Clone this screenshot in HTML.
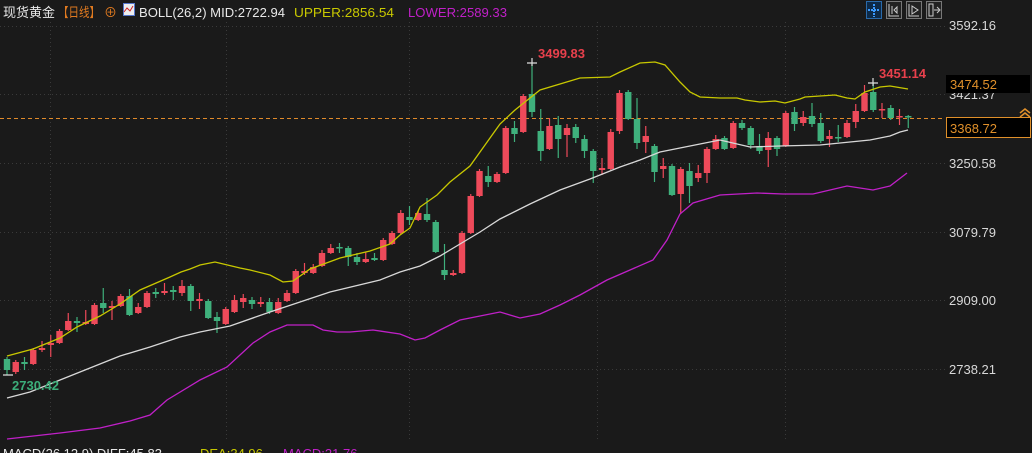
<!DOCTYPE html>
<html><head><meta charset="utf-8"><style>
html,body{margin:0;padding:0;background:#1a1a1a;width:1032px;height:453px;overflow:hidden}
svg{display:block}
text{font-family:"Liberation Sans","Noto Sans CJK SC",sans-serif}
</style></head><body>
<svg id="s" width="1032" height="453" xmlns="http://www.w3.org/2000/svg">
<rect width="1032" height="453" fill="#1a1a1a"/>
<g id="grid" stroke="#3a3a3a" stroke-dasharray="1,3" stroke-width="1">
<line x1="0" y1="94.5" x2="945" y2="94.5"/><line x1="0" y1="163.5" x2="945" y2="163.5"/>
<line x1="0" y1="232.5" x2="945" y2="232.5"/><line x1="0" y1="300.5" x2="945" y2="300.5"/>
<line x1="0" y1="369.5" x2="945" y2="369.5"/><line x1="0" y1="26.5" x2="945" y2="26.5"/>
<line x1="50.5" y1="22" x2="50.5" y2="440"/><line x1="226.5" y1="22" x2="226.5" y2="440"/>
<line x1="409.5" y1="22" x2="409.5" y2="440"/><line x1="597.5" y1="22" x2="597.5" y2="440"/>
<line x1="785.5" y1="22" x2="785.5" y2="440"/>
</g>
<line x1="0" y1="118.5" x2="945" y2="118.5" stroke="#e08a2a" stroke-dasharray="4,3" stroke-width="1"/>
<g id="c"></g>
<polyline fill="none" stroke="#c8c800" stroke-width="1.3" points="7,356 33,349 60,338 77,327 100,316 120,304 140,290 170,277 181,272 190,269 200,265 215,262 240,268 250,270 270,275 283,282 293,281 310,269 340,258 370,251 390,244 400,235 410,228 420,207 437,195 450,182 470,166 500,124 515,110 540,90 580,78 610,77 620,72 640,63 655,62 665,65 680,82 690,92 700,97 720,98 737,98 745,100 760,102 775,101 785,103 800,99 805,97 835,95 847,98 855,99 865,92 880,87 890,86 908,89"/>
<polyline fill="none" stroke="#d8d8d8" stroke-width="1.3" points="7,398 30,392 60,380 90,368 120,356 150,347 180,337 200,332 230,326 270,312 300,302 330,292 380,280 400,272 420,266 440,256 460,244 480,232 500,219 530,204 560,190 590,179 620,167 640,160 660,152 680,148 700,144 720,140 750,147 780,146 820,145 850,142 870,140 890,136 900,132 908,130"/>
<polyline fill="none" stroke="#c020c8" stroke-width="1.3" points="7,439 60,433 100,428 130,421 150,415 167,400 200,380 227,367 253,343 270,332 287,325 313,325 323,330 337,332 350,332 373,330 400,334 415,340 425,338 440,330 460,320 480,316 500,312 520,318 540,314 560,305 580,295 607,280 630,270 653,260 667,240 680,214 693,203 720,195 757,193 783,194 813,194 847,186 873,190 890,186 907,173"/>
<g font-size="13" fill="#d8d8d8">
<text x="949" y="30">3592.16</text>
<text x="949" y="99">3421.37</text>
<text x="949" y="168">3250.58</text>
<text x="949" y="237">3079.79</text>
<text x="949" y="305">2909.00</text>
<text x="949" y="374">2738.21</text>
</g>
<rect x="946" y="75" width="84" height="18" fill="#000"/>
<text x="950" y="89" font-size="13" fill="#e0902a">3474.52</text>
<rect x="946.5" y="117.5" width="84" height="20" fill="#000" stroke="#e0902a"/>
<text x="950" y="133" font-size="13" fill="#e0902a">3368.72</text>
<path d="M1020,113 l5,-4 l5,4 M1020,117 l5,-4 l5,4" fill="none" stroke="#e0902a" stroke-width="1.5"/>
<text x="538" y="58" font-size="13" font-weight="bold" fill="#e8404c">3499.83</text>
<text x="879" y="78" font-size="13" font-weight="bold" fill="#e8404c">3451.14</text>
<text x="12" y="390" font-size="13" font-weight="bold" fill="#3cae7a">2730.42</text>
<path d="M527,63 h10 M532,58 v8 M868,83 h10 M873,78 v8 M3,375 h10" stroke="#ddd" stroke-width="1.2"/>
<g font-size="13">
<text x="3" y="17" fill="#e8e8e8" textLength="52" lengthAdjust="spacingAndGlyphs">现货黄金</text>
<text x="58" y="17" fill="#e07a20" textLength="42" lengthAdjust="spacingAndGlyphs">【日线】</text>
<text x="104" y="17" fill="#e07a20">⊕</text>
<rect x="123.5" y="3.5" width="11" height="12" fill="#eee" stroke="#5577cc"/>
<path d="M124,12 l3,-4 l3,3 l3,-5" stroke="#d02020" fill="none"/>
<text x="139" y="17" fill="#e8e8e8" textLength="146" lengthAdjust="spacingAndGlyphs">BOLL(26,2) MID:2722.94</text>
<text x="294" y="17" fill="#c8c800" textLength="100" lengthAdjust="spacingAndGlyphs">UPPER:2856.54</text>
<text x="408" y="17" fill="#c020c8" textLength="99" lengthAdjust="spacingAndGlyphs">LOWER:2589.33</text>
<text x="3" y="458" fill="#e8e8e8">MACD(26,12,9) DIFF:45.83</text>
<text x="200" y="458" fill="#c8c800">DEA:34.96</text>
<text x="283" y="458" fill="#c020c8">MACD:21.76</text>
</g>
<g stroke-width="1">
<rect x="866.5" y="1.5" width="15" height="17" fill="#0d2a48" stroke="#2a6aaa"/>
<path d="M874,4 v13 M868,10 h12" stroke="#3a9aff" stroke-width="2" stroke-dasharray="2,1"/>
<rect x="886.5" y="1.5" width="15" height="17" fill="#222" stroke="#777"/>
<path d="M889,4 v12 h10 M892,6 v8 M897,7 v6 M894,10 l3,-3 v6z" stroke="#ccc" fill="none"/>
<rect x="906.5" y="1.5" width="15" height="17" fill="#222" stroke="#777"/>
<path d="M909,4 v12 h10 M912,6 l6,4 l-6,4z" stroke="#ccc" fill="none"/>
<rect x="926.5" y="1.5" width="15" height="17" fill="#222" stroke="#777"/>
<path d="M929,4 h4 v12 h-4z M934,10 h5 M937,7 l3,3 l-3,3" stroke="#ccc" fill="none"/>
</g>
</svg>
<script>
var d=[
[359,370,357,375,1],[362,372,360,374,0],[362,364,357,370,1],[350,364,348,365,0],[348,350,341,352,0],[343,345,335,357,0],[331,343,329,344,0],[321,330,313,331,0],[321,323,317,332,1],[322,324,310,325,0],
[305,324,303,325,0],[303,308,288,313,1],[306,308,301,320,0],[296,306,294,307,0],[296,315,289,316,1],[307,313,303,314,0],[293,307,291,308,0],[292,294,288,298,1],[291,293,283,295,0],[290,292,286,300,1],
[286,293,280,296,0],[286,301,284,311,1],[299,301,293,309,0],[301,318,299,319,1],[317,321,312,333,1],[309,324,307,325,0],[300,312,295,313,0],[298,302,294,308,0],[300,304,297,309,1],[302,304,297,307,0],
[302,312,298,314,1],[302,313,298,314,0],[293,301,290,302,0],[271,293,269,294,0],[271,273,263,275,0],[267,273,264,274,0],[253,266,250,267,0],[248,253,244,254,0],[247,248,243,253,1],[248,257,246,266,1],
[257,262,253,265,1],[259,262,252,263,0],[258,260,253,261,1],[240,260,238,261,0],[233,244,231,245,0],[213,233,210,234,0],[217,220,206,225,1],[213,220,211,221,0],[214,220,198,222,1],[222,252,220,253,1],
[270,275,244,280,1],[273,275,270,276,0],[233,273,231,274,0],[196,233,194,234,0],[171,196,169,197,0],[176,182,166,187,1],[174,182,172,183,0],[128,173,126,174,0],[128,134,121,142,1],[96,132,94,133,0],
[94,112,63,117,1],[131,151,109,161,1],[126,149,118,150,0],[125,139,116,158,1],[128,135,124,157,0],[127,138,124,143,1],[139,151,135,158,1],[151,171,149,183,1],[168,170,158,175,0],[132,169,129,170,0],
[93,131,90,134,0],[92,119,90,120,1],[119,143,98,149,1],[136,142,126,153,0],[146,172,144,182,1],[166,169,158,178,0],[166,195,164,196,1],[169,194,167,213,0],[171,186,163,203,1],[173,178,165,182,0],
[149,173,147,183,0],[139,149,135,150,0],[138,149,136,150,1],[123,148,121,149,0],[123,128,120,130,1],[128,145,126,149,1],[146,151,134,154,1],[138,150,132,167,0],[138,149,136,156,1],[113,146,111,147,0],
[112,124,107,131,1],[117,123,111,126,0],[116,124,103,127,1],[123,141,113,143,1],[136,139,130,147,0],[137,138,125,142,1],[123,137,120,138,0],[111,122,104,128,0],[93,111,85,112,0],[92,110,83,112,1],
[109,110,103,118,0],[108,118,105,120,1],[116,117,109,125,0],[116,117,115,128,1]];
var g=document.getElementById('c'),h='';
d.forEach(function(c,i){var x=7+8.75*i,col=c[4]?'#3fb07c':'#ee4a5a';
h+='<line x1="'+x+'" y1="'+c[2]+'" x2="'+x+'" y2="'+c[3]+'" stroke="'+col+'" stroke-width="1.2"/>';
h+='<rect x="'+(x-3.2)+'" y="'+c[0]+'" width="6.4" height="'+Math.max(1.5,c[1]-c[0])+'" fill="'+col+'"/>';});
g.innerHTML=h;
</script>
</body></html>
